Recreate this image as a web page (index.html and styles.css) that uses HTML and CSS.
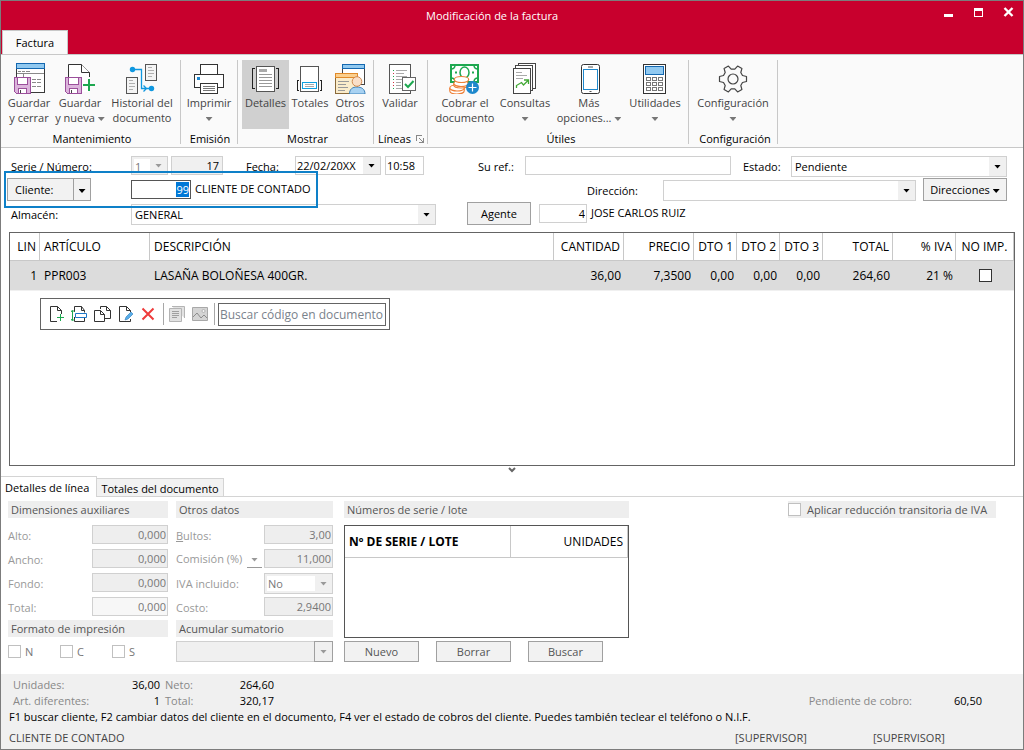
FILE: index.html
```html
<!DOCTYPE html>
<html lang="es">
<head>
<meta charset="utf-8">
<title>Modificación de la factura</title>
<link rel="stylesheet" href="styles.css">
</head>
<body>
<div class="window">
  <header class="titlebar">
    <h1 class="title">Modificación de la factura</h1>
    <div class="window-buttons">
      <button aria-label="Minimizar"><svg width="12" height="12" shape-rendering="crispEdges"><path d="M1 8h9v3H1z" fill="#fff"/></svg></button>
      <button aria-label="Maximizar"><svg width="12" height="12" shape-rendering="crispEdges"><path d="M1 2h9v9H1zM2 5v5h7V5z" fill="#fff" fill-rule="evenodd"/></svg></button>
      <button aria-label="Cerrar"><svg width="12" height="12"><path d="M1.500 2l8 8M9.500 2l-8 8" stroke="#fff" stroke-width="2.400"/></svg></button>
    </div>
    <button class="ribbon-tab">Factura</button>
  </header>

  <nav class="ribbon">
    <section class="group g-mant">
      <div class="tools">
        <button class="tool w50"><svg class="icon" viewBox="0 0 32 32" shape-rendering="crispEdges"><path d="M3.500 1.500h28v29h-28z" fill="#fff" stroke="#3a3a3a"/><path d="M3.500 1.500h28v5h-28z" fill="#91c9f0" stroke="#1468b0"/><path d="M5 9h3M9 9h3M13 9h4M4 11.500h27M10 11v4M19 17.500h4M24 17.500h4M19 20.500h4M24 20.500h4M19 24.500h4M24 24.500h4" stroke="#8a8a8a" fill="none"/><path d="M1.500 15.500h16v16h-14l-2-2z" fill="#dcb4dc" stroke="#9b4f9b"/><path d="M4.500 15.500h10v7h-10z" fill="#fff" stroke="#9b4f9b"/><path d="M5.500 26.500h8v5h-8z" fill="#fff" stroke="#9b4f9b"/><path d="M7 28v3" stroke="#444"/></svg><span>Guardar<br>y cerrar</span></button>
        <button class="tool w52"><svg class="icon" viewBox="0 0 32 32"><path d="M4.500 31.500v-29h13l8 8v21z" fill="#fff" stroke="#333"/><path d="M17.500 2.500v8h8" fill="#fff" stroke="#333"/><g shape-rendering="crispEdges"><path d="M18 31h9M26 15v17" stroke="#fafafa" stroke-width="2"/><path d="M1.500 15.500h16v16h-14l-2-2z" fill="#dcb4dc" stroke="#9b4f9b"/><path d="M4.500 15.500h10v7h-10z" fill="#fff" stroke="#9b4f9b"/><path d="M5.500 26.500h8v5h-8z" fill="#fff" stroke="#9b4f9b"/><path d="M7 28v3" stroke="#444"/><path d="M19 23h12M25 17v12" stroke="#1ea850" stroke-width="2"/></g></svg><span>Guardar<br>y nueva <i class="caret"></i></span></button>
        <button class="tool w72"><svg class="icon" viewBox="0 0 32 32"><g fill="#f4f4f4" stroke="#555" shape-rendering="crispEdges"><path d="M19.500 2.500h11v16h-11zM.5 15.500h11v16H.5z"/><path d="M22 5.500h4M22 8.500h6M22 11.500h6M22 14.500h4M3 18.500h4M3 21.500h6M3 24.500h6M3 27.500h4" stroke="#b0b0b0"/></g><path d="M6 7.500h9.500v19H25M17.500 23.500l3 3-3 3" fill="none" stroke="#1098e0" stroke-width="1.300"/><circle cx="6.500" cy="7.500" r="2.700" fill="#1098e0"/><circle cx="25.500" cy="26.500" r="2.700" fill="#1098e0"/></svg><span>Historial del<br>documento</span></button>
      </div>
      <h2>Mantenimiento</h2>
    </section>
    <section class="group g-emi">
      <div class="tools">
        <button class="tool w52"><svg class="icon" viewBox="0 0 32 32" shape-rendering="crispEdges"><path d="M7.500 12.500v-10h17v10M1.500 12.500h29v13h-29z" fill="#fff" stroke="#333"/><path d="M7.500 21.500h17v10h-17z" fill="#fff" stroke="#333"/><path d="M10 24.500h12M10 26.500h12M10 28.500h12" stroke="#777"/><path d="M4 15h3v3H4z" fill="#1e88d0"/></svg><span>Imprimir<br><i class="caret"></i></span></button>
      </div>
      <h2>Emisión</h2>
    </section>
    <section class="group g-mos">
      <div class="tools">
        <button class="tool w47 active"><svg class="icon" viewBox="0 0 32 32" shape-rendering="crispEdges"><path d="M6.500 4.500h18v25h-18z" fill="#fff" stroke="#555"/><path d="M9 7h8v3H9z" fill="#aaa"/><path d="M9 12.500h13M9 15.500h13M9 18.500h13M9 21.500h13M9 24.500h13" stroke="#999"/><path d="M5 6.500H2.500v20H5M26 6.500h2.500v20H26" fill="none" stroke="#222"/></svg><span>Detalles</span></button>
        <button class="tool w42"><svg class="icon" viewBox="0 0 32 32" shape-rendering="crispEdges"><path d="M6.500 4.500h18v25h-18z" fill="#fff" stroke="#555"/><path d="M8.500 20.500h14v6h-14z" fill="#fff" stroke="#10a0e0"/><path d="M11 22.500h9M11 24.500h9" stroke="#aaa"/><path d="M5 18.500H3.500v10H5M26 18.500h1.500v10H26" fill="none" stroke="#222"/></svg><span>Totales</span></button>
        <button class="tool w38"><svg class="icon" viewBox="0 0 32 32"><g shape-rendering="crispEdges"><path d="M8.500 2.500h22v20h-22z" fill="#fff" stroke="#444"/><path d="M8.500 2.500h22v4h-22z" fill="#91c9f0" stroke="#1468b0"/><path d="M1.500 11.500h22v20h-22z" fill="#faeccb" stroke="#8a6a3a"/><path d="M1.500 11.500h22v4h-22z" fill="#fbcf8d" stroke="#e08a2a"/><path d="M4 19.500h11M4 22.500h8M4 25.500h10M4 28.500h7" stroke="#999"/></g><path d="M15.500 32c0-5 3-7 7.500-7s8 2 8 7z" fill="#a8d2f2" stroke="#3a80b8"/><circle cx="23" cy="19.500" r="4.800" fill="#fadfc8" stroke="#d08a50"/></svg><span>Otros<br>datos</span></button>
      </div>
      <h2>Mostrar</h2>
    </section>
    <section class="group g-lin">
      <div class="tools">
        <button class="tool w50"><svg class="icon" viewBox="0 0 32 32"><g shape-rendering="crispEdges"><path d="M5.500 2.500h21v29h-21z" fill="#fff" stroke="#555"/><path d="M12 8.500h11M12 11.500h8M12 14.500h11M12 17.500h6M12 20.500h5M12 23.500h5M12 26.500h6" stroke="#aaa"/><path d="M9 8.500h1M9 14.500h1M9 17.500h1M9 26.500h1" stroke="#1ea850"/><path d="M9 11.500h1M9 20.500h1M9 23.500h1" stroke="#d03040"/><path d="M18.500 15.500h13v13h-13z" fill="#fff" stroke="#666"/></g><path d="M21 22l3 3 5.500-6" fill="none" stroke="#1ea850" stroke-width="2"/></svg><span>Validar</span></button>
      </div>
      <h2>Líneas <svg class="launcher" width="8" height="8" shape-rendering="crispEdges"><path d="M.5 6V.5H6M3 3l4 4M7.500 3v4.500H3" fill="none" stroke="#888"/></svg></h2>
    </section>
    <section class="group g-uti">
      <div class="tools">
        <button class="tool w62"><svg class="icon" viewBox="0 0 32 32"><path d="M2 3h27v17H2z" fill="#fff" stroke="#1ea850" stroke-width="2"/><path d="M6 3c0 2.500-1.500 4-4 4M25 3c0 2.500 1.500 4 4 4M6 20c0-2.500-1.500-4-4-4M25 20c0-2.500 1.500-4 4-4" fill="none" stroke="#1ea850" stroke-width="1.500"/><ellipse cx="15.500" cy="10.500" rx="4.500" ry="5.500" fill="#fff" stroke="#1ea850" stroke-width="1.500"/><path d="M6 10.500h2M23 10.500h2" stroke="#1ea850" stroke-width="2"/><g fill="#fff" stroke="#ee8038" stroke-width="1.200"><path d="M.8 26v3c0 1.800 3 3 7.200 3s7.200-1.200 7.200-3v-3"/><ellipse cx="8" cy="26" rx="7.200" ry="3"/><path d="M4.800 21v2c0 1.800 3 3 7.200 3s7.200-1.200 7.200-3v-2"/><ellipse cx="12" cy="21.500" rx="7.200" ry="3"/><ellipse cx="12.500" cy="17.500" rx="7.200" ry="3"/></g><circle cx="23.500" cy="25.500" r="6.500" fill="#1e88cc"/><path d="M19.500 25.500h8M23.500 21.500v8" stroke="#fff" stroke-width="1.200"/></svg><span>Cobrar el<br>documento</span></button>
        <button class="tool w58"><svg class="icon" viewBox="0 0 32 32"><g fill="#fff" stroke="#444" shape-rendering="crispEdges"><path d="M9.500 1.500h17v25h-17z"/><path d="M6.500 3.500h17v25h-17z"/><path d="M4.500 6.500h17v25h-17z"/><path d="M7 10.500h6M7 13.500h11M7 16.500h7" stroke="#aaa"/></g><path d="M7.500 26v-2.500l5-3 2 2.500 4.500-4.500M15 18h4.500v4" fill="none" stroke="#43a836" stroke-width="1.300"/></svg><span>Consultas<br><i class="caret"></i></span></button>
        <button class="tool w70"><svg class="icon" viewBox="0 0 32 32"><rect x="8.500" y="2.500" width="18" height="29" rx="2" fill="#fff" stroke="#333"/><path d="M10.500 7.500h14v20h-14z" fill="#fff" stroke="#1e88cc" shape-rendering="crispEdges"/><path d="M15 5h5M16.500 29.500h2" stroke="#555"/></svg><span>Más<br>opciones... <i class="caret"></i></span></button>
        <button class="tool w62"><svg class="icon" viewBox="0 0 32 32" shape-rendering="crispEdges"><path d="M4.500 2.500h22v29h-22z" fill="#fff" stroke="#333"/><path d="M6.500 4.500h18v8h-18z" fill="#91c9f0" stroke="#1468b0"/><path d="M7.500 15.500h4v3h-4zM13.500 15.500h4v3h-4zM19.500 15.500h4v3h-4zM7.500 20.500h4v3h-4zM13.500 20.500h4v3h-4zM19.500 20.500h4v3h-4zM7.500 25.500h4v3h-4zM13.500 25.500h4v3h-4zM19.500 25.500h4v3h-4z" fill="#fff" stroke="#777"/></svg><span>Utilidades<br><i class="caret"></i></span></button>
      </div>
      <h2>Útiles</h2>
    </section>
    <section class="group g-conf">
      <div class="tools">
        <button class="tool w80"><svg class="icon" viewBox="0 0 32 32"><g transform="translate(16 17)" fill="none" stroke="#444" stroke-width="1.200" stroke-linejoin="round"><path d="M9.500-3.500L13.500-2.500V2.500L9.500 3.500 7.800 6.500 8.900 10.400 4.600 12.900 1.800 9.800H-1.800L-4.600 12.900-8.900 10.400-7.800 6.500-9.500 3.500-13.500 2.500V-2.500L-9.500-3.500-7.800-6.500-8.900-10.400-4.600-12.900-1.800-9.800H1.800L4.600-12.900 8.900-10.400 7.800-6.500Z"/><circle r="5"/></g></svg><span>Configuración<br><i class="caret"></i></span></button>
      </div>
      <h2>Configuración</h2>
    </section>
  </nav>

  <form class="header-form">
    <div class="row">
      <label class="lead" for="serie">Serie / Número:</label>
      <span class="pick serie off"><select id="serie" disabled><option>1</option></select></span>
      <input class="num numero" aria-label="Número" value="17" readonly>
      <label class="l-fecha" for="fecha">Fecha:</label>
      <span class="pick fecha"><input id="fecha" value="22/02/20XX"></span>
      <input class="hora" aria-label="Hora" value="10:58">
      <label class="l-ref" for="ref">Su ref.:</label>
      <input class="ref" id="ref">
      <label class="l-estado" for="estado">Estado:</label>
      <span class="pick estado"><select id="estado"><option>Pendiente</option></select></span>
    </div>
    <div class="row row-client">
      <div class="split"><button type="button">Cliente:</button><button type="button" aria-label="Más opciones de cliente"><i class="caret dark"></i></button></div>
      <input class="num cliente" id="cliente" aria-label="Cliente" value="99">
      <span class="after">CLIENTE DE CONTADO</span>
      <label class="l-dir" for="dir">Dirección:</label>
      <span class="pick dir"><select id="dir"><option></option></select></span>
      <button type="button" class="btn b-dir">Direcciones <i class="caret dark"></i></button>
      <div class="focus-frame"></div>
    </div>
    <div class="row row-store">
      <label class="lead" for="almacen">Almacén:</label>
      <span class="pick almacen"><select id="almacen"><option>GENERAL</option></select></span>
      <button type="button" class="btn b-agent">Agente</button>
      <input class="num agente" aria-label="Agente" value="4">
      <span class="after">JOSE CARLOS RUIZ</span>
    </div>
  </form>

  <main class="lines">
    <table class="grid">
      <colgroup><col class="c30"><col class="c110"><col><col class="c70"><col class="c70"><col class="c43"><col class="c43"><col class="c43"><col class="c70"><col class="c63"><col class="c58"></colgroup>
      <thead><tr><th class="r">LIN</th><th>ARTÍCULO</th><th>DESCRIPCIÓN</th><th class="r">CANTIDAD</th><th class="r">PRECIO</th><th class="r">DTO 1</th><th class="r">DTO 2</th><th class="r">DTO 3</th><th class="r">TOTAL</th><th class="r">% IVA</th><th class="c">NO IMP.</th></tr></thead>
      <tbody><tr><td class="r">1</td><td>PPR003</td><td>LASAÑA BOLOÑESA 400GR.</td><td class="r">36,00</td><td class="r">7,3500</td><td class="r">0,00</td><td class="r">0,00</td><td class="r">0,00</td><td class="r">264,60</td><td class="r">21 %</td><td class="c"><input type="checkbox" class="check strong" aria-label="No imprimir"></td></tr></tbody>
    </table>
    <div class="toolbar">
      <button aria-label="Nueva línea"><svg viewBox="0 0 18 18"><path d="M9 16.500H2.500v-15h7l4 4V9M9.500 1.500v4h4" fill="none" stroke="#333"/><path d="M9 12.500h7M12.500 9v7" stroke="#1ea850"/></svg></button>
      <button aria-label="Insertar línea"><svg viewBox="0 0 18 18"><path d="M3.500 7V1.500h7l3 4v2M10.500 1.500v4h3M3.500 12v4.500h10V13" fill="none" stroke="#333"/><path d="M4.500 8.500h11v4h-11z" fill="#fff" stroke="#1e78c8"/><path d="M1.500 6v9M0 7l1.500-2L3.500 7M0 14l1.500 2 2-2" fill="none" stroke="#1ea850"/></svg></button>
      <button aria-label="Duplicar línea"><svg viewBox="0 0 18 18"><path d="M6.500 4V1.500h6l4 4v8H11M12.500 1.500v4h4" fill="none" stroke="#333"/><path d="M.5 5.500h6l4 4v7H.5zM6.500 5.500v4h4" fill="#fff" stroke="#333"/></svg></button>
      <button aria-label="Editar línea"><svg viewBox="0 0 18 18"><path d="M13.500 14v2.500h-11v-15h7l4 4V7M9.500 1.500v4h4" fill="none" stroke="#333"/><path d="M8 15l1-3 5-5 2 2-5 5z" fill="#58aeea" stroke="#2a7ab8" stroke-width=".6"/></svg></button>
      <button aria-label="Eliminar línea"><svg viewBox="0 0 18 18"><path d="M2.500 3.500l11 11M13.500 3.500l-11 11" stroke="#ee3b3b" stroke-width="2"/></svg></button>
      <i class="sep"></i>
      <button aria-label="Detalle" disabled><svg viewBox="0 0 18 18"><path d="M4 1.500h12.500V13M1.500 3.500h12v13h-12z" fill="#e2e2e2" stroke="#b4b4b4"/><path d="M4 6.500h7M4 8.500h7M4 10.500h7M4 12.500h5" stroke="#a0a0a0"/></svg></button>
      <button aria-label="Imagen" disabled><svg viewBox="0 0 18 18"><path d="M1.500 2.500h15v13h-15z" fill="#d4d4d4" stroke="#a8a8a8"/><path d="M2 12l4-4 4 5 3-3 3 3" fill="none" stroke="#8c8c8c"/><circle cx="12.500" cy="6" r="1.500" fill="#f4f4f4" stroke="#999" stroke-width=".6"/></svg></button>
      <i class="sep"></i>
      <input class="search" aria-label="Buscar código en documento" placeholder="Buscar código en documento">
    </div>
  </main>

  <div class="splitter"><svg width="8" height="6"><path d="M1 1l3 3 3-3" fill="none" stroke="#666" stroke-width="2"/></svg></div>

  <div class="tabs"><button class="tab on">Detalles de línea</button><button class="tab">Totales del documento</button></div>

  <section class="details">
    <div class="col">
      <h3>Dimensiones auxiliares</h3>
      <div class="fields dims">
        <label for="alto">Alto:</label><input id="alto" class="num" value="0,000" disabled>
        <label for="ancho">Ancho:</label><input id="ancho" class="num" value="0,000" disabled>
        <label for="fondo">Fondo:</label><input id="fondo" class="num" value="0,000" disabled>
        <label for="total">Total:</label><input id="total" class="num pale" value="0,000" disabled>
      </div>
      <h3>Formato de impresión</h3>
      <div class="checks">
        <label><input type="checkbox" class="check" disabled>N</label>
        <label><input type="checkbox" class="check" disabled>C</label>
        <label><input type="checkbox" class="check" disabled>S</label>
      </div>
    </div>
    <div class="col">
      <h3>Otros datos</h3>
      <div class="fields otros">
        <label for="bultos"><u>B</u>ultos:</label><input id="bultos" class="num" value="3,00" disabled>
        <div class="commission"><label for="comision">Comisión (%)</label><button disabled aria-label="Tipo de comisión"><i class="caret pale-caret"></i></button></div><input id="comision" class="num" value="11,000" disabled>
        <label for="iva">IVA incluido:</label><span class="pick off"><select id="iva" disabled><option>No</option></select></span>
        <label for="costo">Costo:</label><input id="costo" class="num" value="2,9400" disabled>
      </div>
      <h3 id="acumular">Acumular sumatorio</h3>
      <span class="pick off sum"><select aria-labelledby="acumular" disabled><option></option></select></span>
    </div>
    <div class="col serials">
      <h3>Números de serie / lote</h3>
      <div class="serial-box">
        <table><thead><tr><th>Nº DE SERIE / LOTE</th><th class="r">UNIDADES</th></tr></thead></table>
      </div>
      <div class="actions"><button class="btn">Nuevo</button><button class="btn">Borrar</button><button class="btn">Buscar</button></div>
    </div>
    <label class="reduction"><input type="checkbox" class="check" disabled>Aplicar reducción transitoria de IVA</label>
  </section>

  <footer class="status">
    <div class="sums">
      <span>Unidades:</span><b>36,00</b><span class="gap">Neto:</span><b>264,60</b><span></span><b></b>
      <span>Art. diferentes:</span><b>1</b><span class="gap">Total:</span><b>320,17</b><span class="due">Pendiente de cobro:</span><b>60,50</b>
    </div>
    <p class="hint">F1 buscar cliente, F2 cambiar datos del cliente en el documento, F4 ver el estado de cobros del cliente. Puedes también teclear el teléfono o N.I.F.</p>
    <div class="users"><span>CLIENTE DE CONTADO</span><span>[SUPERVISOR]</span><span>[SUPERVISOR]</span></div>
  </footer>
</div>
<script src="app.js"></script>
</body>
</html>
```
FILE: styles.css
```css
* { box-sizing: border-box; }
body { margin: 0; font: 11px/15px "Open Sans", "Noto Sans", sans-serif; color: #000; }
button, input, select { margin: 0; padding: 0; font: inherit; color: inherit; border: 0; border-radius: 0; background: none; outline: 0; }
h1, h2, h3, p { margin: 0; font: inherit; }
i { font-style: normal; }
svg { display: block; }

.window { display: flex; flex-direction: column; min-height: 100vh; border: 1px solid #7c7c7c; background: #fff; }

.titlebar { display: grid; grid-template: 29px 24px / 1fr auto 1fr; background: #c8002d; }
.title { grid-column: 2; align-self: center; padding-right: 40px; color: #fff; }
.window-buttons { display: flex; justify-content: flex-end; gap: 18px; padding: 5px 8px 0 0; }
.window-buttons button { width: 12px; height: 12px; }
.ribbon-tab { grid-column: 1; justify-self: start; width: 66px; margin-left: 1px; background: #fafafa; border: 1px solid #c8c8c8; border-bottom: 0; }

.ribbon { display: flex; padding: 5px 0 3px; background: #fafafa; border-top: 1px solid #c8c8c8; border-bottom: 1px solid #c8c8c8; }
.group { display: flex; flex-direction: column; justify-content: space-between; height: 84px; padding-left: 3px; border-right: 1px solid #c8c8c8; }
.group h2 { display: flex; justify-content: center; align-items: center; gap: 5px; height: 11px; line-height: 11px; white-space: nowrap; }
.tools { display: flex; }
.tool { display: flex; flex-direction: column; align-items: center; height: 69px; padding-top: 2px; color: #444; white-space: nowrap; }
.tool span { margin-top: 1px; }
.tool.active { background: #d0d0d0; }
.icon { width: 32px; height: 32px; }
.g-mant { width: 180px; }
.g-emi { width: 57px; padding-left: 2px; }
.g-mos { width: 136px; padding-left: 4px; }
.g-lin { width: 54px; padding-left: 1px; }
.g-uti { width: 261px; padding-left: 6px; }
.g-conf { width: 89px; padding-left: 4px; }
.w38 { width: 38px; }
.w42 { width: 42px; }
.w47 { width: 47px; }
.w50 { width: 50px; }
.w52 { width: 52px; }
.w58 { width: 58px; }
.w62 { width: 62px; }
.w70 { width: 70px; }
.w72 { width: 72px; }
.w80 { width: 80px; }

.caret, .pick::after { width: 7px; height: 4px; background: #777; clip-path: polygon(0 0, 100% 0, 50% 100%); }
.caret { display: inline-block; vertical-align: middle; }
.caret.dark { background: #000; }
.caret.pale-caret { background: #999; }

.header-form { padding: 8px 16px 6px 6px; }
.row { display: flex; align-items: flex-start; height: 22px; white-space: nowrap; }
.row label { padding-top: 4px; line-height: 14px; }
.header-form input, .pick { height: 19px; border: 1px solid #d0d0d0; background: #fff; }
.header-form input { padding: 0 3px 1px; min-width: 0; }
.header-form .num, .num { text-align: right; }
.header-form .lead { width: 124px; padding-left: 4px; }
.pick { display: grid; grid-template: 100% / 1fr 17px; }
.pick > * { grid-area: 1 / 1 / 2 / 3; width: 100%; min-width: 0; height: 100%; appearance: none; padding: 0 3px; background: none; }
.header-form .pick > input { height: 100%; border: 0; background: none; padding: 0 1px 1px; }
.pick::before { content: ""; grid-area: 1 / 2; background: #f0f0f0; }
.pick::after { content: ""; grid-area: 1 / 2; place-self: center; background: #000; pointer-events: none; }
.pick.off, .header-form .numero { background: #f0f0f0; }
.pick.off::after { background: #999; }
.pick.off select { color: #777; opacity: 1; width: calc(100% - 19px); height: calc(100% - 4px); margin: 2px; padding: 0 1px; background: #fff; }
.serie { width: 37px; }
.numero { width: 52px; margin-left: 3px; }
.l-fecha { width: 49px; margin-left: 23px; }
.fecha { width: 86px; }
.hora { width: 39px; margin-left: 4px; }
.header-form .hora { padding: 0 1px 1px; }
.l-ref { width: 47px; margin-left: 54px; }
.ref { flex: 1 1 206px; }
.l-estado { width: 48px; margin-left: 12px; }
.estado { flex: 1 1 216px; }
.header-form .estado { height: 21px; }

.row-client, .row-store { height: 24px; }
.row-client { position: relative; }
.split { display: flex; width: 84px; height: 23px; border: 1px solid #a0a0a0; background: #f2f2f2; }
.split button:first-child { flex: 1; padding-left: 7px; text-align: left; border-right: 1px solid #a0a0a0; }
.split button:last-child { width: 16px; }
.header-form .cliente { width: 60px; height: 19px; margin: 2px 0 0 40px; padding: 0 1px; border-color: #555; }
.cliente::selection { background: #0078d7; color: #fff; }
.after { padding: 3px 0 0 4px; }
.header-form .l-dir { width: 76px; margin-left: auto; padding-top: 6px; }
.dir { width: 253px; height: 21px; margin-top: 2px; }
.btn { border: 1px solid #a0a0a0; background: #f2f2f2; height: 23px; }
.b-dir { width: 84px; margin-left: 7px; }
.focus-frame { position: absolute; left: -3px; top: -7px; width: 314px; height: 37px; border: 2px solid #0e80c8; pointer-events: none; }
.header-form .row-store .lead { padding-top: 6px; }
.almacen { width: 305px; height: 21px; margin-top: 2px; }
.b-agent { width: 64px; margin-left: 31px; }
.header-form .agente { width: 48px; margin: 2px 0 0 8px; padding: 0 1px 1px; }

.lines { flex: 1; margin: 0 8px; border: 1px solid #646464; }
.grid { width: 100%; table-layout: fixed; border-collapse: separate; border-spacing: 0; font-size: 12px; white-space: nowrap; }
.grid th, .grid td { padding: 0 4px; text-align: left; font-weight: 400; }
.grid td.r { padding-right: 3px; }
.grid th { height: 28px; border-right: 1px solid #c8c8c8; border-bottom: 1px solid #c8c8c8; }
.grid th.r { padding: 0 3px 0 0; }
.grid td { height: 30px; background: #dcdcdc; border-bottom: 1px solid #f0f0f0; }
.grid .r, .serials .r { text-align: right; }
.grid .c { text-align: center; padding: 0 2px; }
.c30 { width: 30px; }
.c43 { width: 43px; }
.c58 { width: 58px; }
.c63 { width: 63px; }
.c70 { width: 70px; }
.c110 { width: 110px; }
.check { appearance: none; flex: none; width: 13px; height: 13px; border: 1px solid #c0c0c0; background: #fff; }
.check.strong { border-color: #333; display: block; margin: 0 auto; }

.toolbar { display: flex; align-items: center; gap: 5px; width: 350px; height: 32px; margin: 7px 0 0 30px; padding-left: 7px; border: 1px solid #646464; }
.toolbar button { width: 18px; height: 18px; }
.toolbar svg { width: 18px; height: 18px; }
.sep { width: 1px; height: 22px; margin-right: -1px; background: #a8a8a8; }
.search { flex: 1; height: 23px; margin-right: 3px; margin-left: -1px; padding: 0 1px; border: 1px solid #646464; min-width: 0; font-size: 12px; }
.search::placeholder { color: #7a828c; opacity: 1; }

.splitter { display: flex; justify-content: center; height: 10px; padding-top: 1px; }
.tabs { display: flex; align-items: flex-end; height: 21px; border-bottom: 1px solid #d4d4d4; }
.tab { height: 18px; padding: 2px 4px 0; border: 1px solid #d4d4d4; border-bottom: 0; border-left: 0; background: #f2f2f2; font-weight: 500; }
.tab.on { height: 21px; margin-bottom: -1px; padding: 0 7px 0 4px; background: #fff; font-weight: 400; }

.details { display: flex; align-items: flex-start; height: 177px; padding: 4px 27px 0 7px; color: #555; }
.col h3 { height: 17px; padding-left: 3px; line-height: 17px; background: #eee; }
.col:nth-child(1) { width: 160px; }
.col:nth-child(2) { width: 157px; margin-left: 8px; }
.fields { display: grid; grid-auto-rows: 19px; row-gap: 5px; padding: 7px 0 4px; color: #999; }
.fields label { align-self: center; padding-top: 2px; white-space: nowrap; }
.dims { grid-template-columns: 1fr 76px; }
.otros { grid-template-columns: 1fr 69px; }
.fields input { width: 100%; height: 19px; padding: 0 1px 1px; border: 1px solid #d0d0d0; background: #eee; color: #777; }
.fields input.pale { background: #f7f7f7; }
.fields .pick { height: 21px; }
.commission { display: flex; justify-content: space-between; padding-right: 2px; }
.commission label { padding: 0; }
.commission button { width: 15px; border-bottom: 1px solid #999; }
.checks { display: flex; padding-top: 8px; }
.checks label { display: flex; align-items: center; gap: 4px; width: 52px; height: 13px; color: #777; }
.sum { height: 21px; margin-top: 4px; }
.pick.sum select { background: none; }
.sum::before { border: 1px solid #a0a0a0; margin: -1px; }
.serials { width: 285px; margin-left: 11px; }
.serial-box { height: 113px; margin: 7px 0 3px; border: 1px solid #555; }
.serials table { width: 100%; border-spacing: 0; color: #000; font-size: 12px; }
.serials th { height: 32px; padding: 0 4px; border-right: 1px solid #c8c8c8; border-bottom: 1px solid #c8c8c8; text-align: left; }
.serials th:first-child { width: 166px; }
.serials th.r { font-weight: 400; }
.actions { display: flex; gap: 17px; }
.actions .btn { width: 75px; height: 21px; }
.reduction { display: flex; align-items: center; gap: 6px; width: 208px; height: 17px; margin-left: auto; background: #eee; white-space: nowrap; }

.status { height: 75px; padding: 2px 8px 0; background: #f0f0f0; }
.sums { display: grid; grid-template-columns: 87px 60px 60px 54px 1fr 70px; grid-auto-rows: 16px; align-items: center; padding: 0 33px 0 4px; color: #888; white-space: nowrap; }
.sums b { font-weight: 400; color: #000; text-align: right; }
.sums .gap { padding-left: 5px; }
.due { text-align: right; }
.hint { line-height: 18px; white-space: nowrap; }
.users { display: grid; grid-template-columns: 1fr 138px 142px; padding-top: 4px; color: #444; }
```
FILE: app.js
```js
const client = document.getElementById("cliente");
client.focus();
client.select();
```
